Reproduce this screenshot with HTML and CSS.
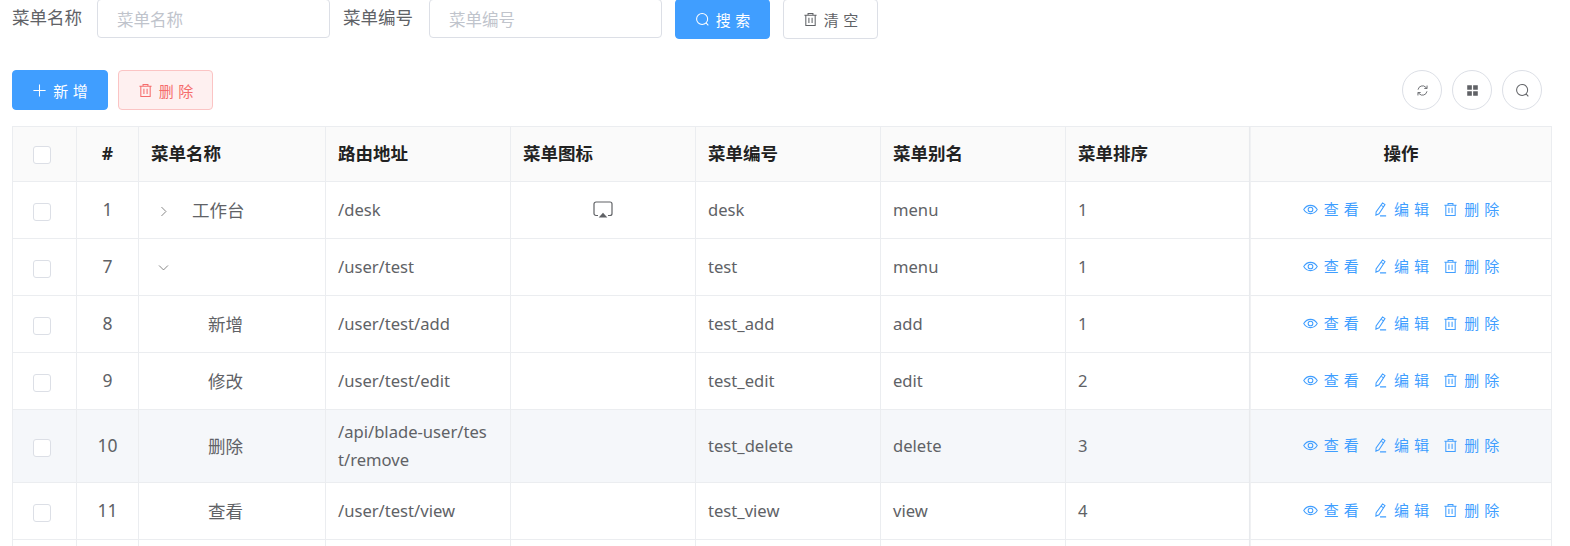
FILE: index.html
```html
<!DOCTYPE html>
<html lang="zh-CN">
<head>
  <meta charset="UTF-8" />
  <title>菜单管理</title>
  <link rel="stylesheet" href="styles.css">
</head>
<body>
  <svg class="sprite" xmlns="http://www.w3.org/2000/svg">
    <symbol id="i-search" viewBox="0 0 16 16"><circle cx="7.6" cy="7.4" r="5.9"/><path d="M11.8 11.7l2.4 2.5"/></symbol>
    <symbol id="i-trash" viewBox="0 0 16 16"><path d="M1.5 3.4h13M5.4 3.200V1.600h5.200v1.600M3 3.400v11h10v-11M6.300 6.200v5.600M9.700 6.200v5.600"/></symbol>
    <symbol id="i-plus" viewBox="0 0 16 16"><path d="M8 1.500v13M1.500 8h13"/></symbol>
    <symbol id="i-refresh" viewBox="0 0 16 16"><path d="M2.500 7a5.600 5.600 0 0 1 9.600-3l1.200 1.300M13.500 9a5.600 5.600 0 0 1-9.600 3l-1.200-1.300M13.600 1.900v3.600h-3.400M2.400 14.100v-3.600h3.400"/></symbol>
    <symbol id="i-menu" viewBox="0 0 16 16"><path class="solid" d="M1.500 1.500h5.700v5.700H1.500zM8.800 1.500h5.700v5.700H8.800zM1.500 8.800h5.700v5.700H1.500zM8.800 8.800h5.700v5.700H8.800z"/></symbol>
    <symbol id="i-eye" viewBox="0 0 16 16"><path d="M.8 8C2.500 5.200 5 3.600 8 3.600s5.500 1.600 7.200 4.400c-1.700 2.800-4.200 4.400-7.200 4.400S2.500 10.800.8 8z"/><circle cx="8" cy="8" r="2.500"/></symbol>
    <symbol id="i-edit" viewBox="0 0 16 16"><path d="M10.200 1l2.600 1.700-6.400 9.800-3.300 1.500.2-3.500zM8.600 3.400l2.600 1.800M7.500 14.800h6.500"/></symbol>
    <symbol id="i-airplay" viewBox="0 0 20 18"><path d="M5 14.500H3a2 2 0 0 1-2-2V3a2 2 0 0 1 2-2h14a2 2 0 0 1 2 2v9.500a2 2 0 0 1-2 2h-2"/><path class="solid" d="M10 11.800l4.300 4.600H5.700z"/></symbol>
    <symbol id="i-right" viewBox="0 0 16 16"><path d="M5.500 2.500L11 8l-5.500 5.500"/></symbol>
    <symbol id="i-down" viewBox="0 0 16 16"><path d="M2.500 5.500L8 11l5.500-5.500"/></symbol>
  </svg>

  <div class="page">
    <form class="search-form">
      <label class="form-label">菜单名称</label>
      <input class="form-input" type="text" placeholder="菜单名称" />
      <label class="form-label label-code">菜单编号</label>
      <input class="form-input" type="text" placeholder="菜单编号" />
      <button type="button" class="btn btn-primary btn-search"><svg class="icon"><use href="#i-search"/></svg>搜 索</button>
      <button type="button" class="btn btn-clear"><svg class="icon"><use href="#i-trash"/></svg>清 空</button>
    </form>

    <div class="toolbar">
      <button type="button" class="btn btn-primary"><svg class="icon"><use href="#i-plus"/></svg>新 增</button>
      <button type="button" class="btn btn-danger"><svg class="icon"><use href="#i-trash"/></svg>删 除</button>
      <div class="tool-right">
        <button type="button" class="btn-circle"><svg class="icon icon-sm"><use href="#i-refresh"/></svg></button>
        <button type="button" class="btn-circle"><svg class="icon icon-sm"><use href="#i-menu"/></svg></button>
        <button type="button" class="btn-circle"><svg class="icon"><use href="#i-search"/></svg></button>
      </div>
    </div>

    <table class="menu-table">
      <colgroup>
        <col class="c-check"><col class="c-index"><col class="c-name"><col class="c-path"><col class="c-std"><col class="c-std"><col class="c-std"><col class="c-sort"><col class="c-op">
      </colgroup>
      <thead>
        <tr>
          <th class="center check"><span class="checkbox"></span></th>
          <th class="center">#</th>
          <th>菜单名称</th>
          <th>路由地址</th>
          <th>菜单图标</th>
          <th>菜单编号</th>
          <th>菜单别名</th>
          <th>菜单排序</th>
          <th class="center op">操作</th>
        </tr>
      </thead>
      <tbody>
        <tr>
          <td class="center check"><span class="checkbox"></span></td>
          <td class="center num">1</td>
          <td><svg class="icon tree-arrow"><use href="#i-right"/></svg><span class="tree-name">工作台</span></td>
          <td>/desk</td>
          <td class="center icon-cell"><svg class="icon airplay"><use href="#i-airplay"/></svg></td>
          <td>desk</td>
          <td>menu</td>
          <td>1</td>
          <td class="center op">
            <a class="op-link"><svg class="icon"><use href="#i-eye"/></svg>查 看</a>
            <a class="op-link"><svg class="icon"><use href="#i-edit"/></svg>编 辑</a>
            <a class="op-link"><svg class="icon"><use href="#i-trash"/></svg>删 除</a>
          </td>
        </tr>
        <tr>
          <td class="center check"><span class="checkbox"></span></td>
          <td class="center num">7</td>
          <td><svg class="icon tree-arrow"><use href="#i-down"/></svg></td>
          <td>/user/test</td>
          <td></td>
          <td>test</td>
          <td>menu</td>
          <td>1</td>
          <td class="center op">
            <a class="op-link"><svg class="icon"><use href="#i-eye"/></svg>查 看</a>
            <a class="op-link"><svg class="icon"><use href="#i-edit"/></svg>编 辑</a>
            <a class="op-link"><svg class="icon"><use href="#i-trash"/></svg>删 除</a>
          </td>
        </tr>
        <tr>
          <td class="center check"><span class="checkbox"></span></td>
          <td class="center num">8</td>
          <td><span class="tree-child">新增</span></td>
          <td>/user/test/add</td>
          <td></td>
          <td>test_add</td>
          <td>add</td>
          <td>1</td>
          <td class="center op">
            <a class="op-link"><svg class="icon"><use href="#i-eye"/></svg>查 看</a>
            <a class="op-link"><svg class="icon"><use href="#i-edit"/></svg>编 辑</a>
            <a class="op-link"><svg class="icon"><use href="#i-trash"/></svg>删 除</a>
          </td>
        </tr>
        <tr>
          <td class="center check"><span class="checkbox"></span></td>
          <td class="center num">9</td>
          <td><span class="tree-child">修改</span></td>
          <td>/user/test/edit</td>
          <td></td>
          <td>test_edit</td>
          <td>edit</td>
          <td>2</td>
          <td class="center op">
            <a class="op-link"><svg class="icon"><use href="#i-eye"/></svg>查 看</a>
            <a class="op-link"><svg class="icon"><use href="#i-edit"/></svg>编 辑</a>
            <a class="op-link"><svg class="icon"><use href="#i-trash"/></svg>删 除</a>
          </td>
        </tr>
        <tr class="hover">
          <td class="center check"><span class="checkbox"></span></td>
          <td class="center num">10</td>
          <td><span class="tree-child">删除</span></td>
          <td class="path-wrap">/api/blade-user/test/remove</td>
          <td></td>
          <td>test_delete</td>
          <td>delete</td>
          <td>3</td>
          <td class="center op">
            <a class="op-link"><svg class="icon"><use href="#i-eye"/></svg>查 看</a>
            <a class="op-link"><svg class="icon"><use href="#i-edit"/></svg>编 辑</a>
            <a class="op-link"><svg class="icon"><use href="#i-trash"/></svg>删 除</a>
          </td>
        </tr>
        <tr>
          <td class="center check"><span class="checkbox"></span></td>
          <td class="center num">11</td>
          <td><span class="tree-child">查看</span></td>
          <td>/user/test/view</td>
          <td></td>
          <td>test_view</td>
          <td>view</td>
          <td>4</td>
          <td class="center op">
            <a class="op-link"><svg class="icon"><use href="#i-eye"/></svg>查 看</a>
            <a class="op-link"><svg class="icon"><use href="#i-edit"/></svg>编 辑</a>
            <a class="op-link"><svg class="icon"><use href="#i-trash"/></svg>删 除</a>
          </td>
        </tr>
        <tr>
          <td></td><td></td><td></td><td></td><td></td><td></td><td></td><td></td><td class="op"></td>
        </tr>
      </tbody>
    </table>
  </div>
</body>
</html>
```

FILE: styles.css
```css
html, body {
  margin: 0;
  height: 546px;
  overflow: hidden;
  background: #fff;
}

body {
  font-family: "Noto Sans", "Noto Sans CJK SC", sans-serif;
  font-size: 17.5px;
  color: #606266;
}

.sprite {
  display: none;
}

.icon {
  width: 15px;
  height: 15px;
  fill: none;
  stroke: currentColor;
  stroke-width: 1.1;
  flex: none;
}

.icon-sm {
  width: 13px;
  height: 13px;
}

.solid {
  fill: currentColor;
  stroke: none;
}

.page {
  margin-top: -1px;
  padding: 0 20px 0 12px;
}

/* search form */
.search-form {
  display: flex;
  align-items: flex-start;
  height: 40px;
}

.form-label {
  width: 85px;
  line-height: 37px;
  color: #606266;
  font-size: 17.5px;
}

.label-code {
  width: 86px;
  margin-left: 13px;
}

.form-input {
  box-sizing: border-box;
  width: 233px;
  height: 39px;
  padding: 0 19px;
  border: 1px solid #dcdfe6;
  border-radius: 4px;
  font: 16.5px "Noto Sans CJK SC", sans-serif;
  color: #606266;
  outline: none;
}

.form-input::placeholder {
  color: #c0c4cc;
}

.btn {
  box-sizing: border-box;
  display: inline-flex;
  align-items: center;
  justify-content: center;
  gap: 6px;
  width: 95px;
  height: 40px;
  padding: 0;
  border: 1px solid #dcdfe6;
  border-radius: 4px;
  background: #fff;
  color: #606266;
  font: 15px "Noto Sans CJK SC", sans-serif;
  word-spacing: 1px;
}

.btn-primary {
  background: #409eff;
  border-color: #409eff;
  color: #fff;
}

.btn-search {
  margin-left: 13px;
}

.btn-clear {
  margin-left: 13px;
}

.btn-danger {
  background: #fef0f0;
  border-color: #fbc4c4;
  color: #f56c6c;
}

/* toolbar */
.toolbar {
  display: flex;
  gap: 10px;
  margin-top: 31px;
}

.toolbar .btn-primary {
  width: 96px;
}

.tool-right {
  display: flex;
  gap: 10px;
  margin-left: auto;
  margin-right: 8px;
}

.btn-circle {
  box-sizing: border-box;
  display: flex;
  align-items: center;
  justify-content: center;
  width: 40px;
  height: 40px;
  padding: 0;
  border: 1px solid #dcdfe6;
  border-radius: 50%;
  background: #fff;
  color: #606266;
}

/* table */
.menu-table {
  box-sizing: border-box;
  width: 1540px;
  margin-top: 16px;
  table-layout: fixed;
  border-collapse: separate;
  border-spacing: 0;
  border-top: 1px solid #ebedf0;
  border-left: 1px solid #ebedf0;
}

.c-check { width: 64px; }
.c-index { width: 62px; }
.c-name { width: 187px; }
.c-path { width: 185px; }
.c-std { width: 185px; }
.c-sort { width: 184px; }
.c-op { width: 302px; }

th, td {
  padding: 8px 17px 8px 12px;
  border-right: 1px solid #ebedf0;
  border-bottom: 1px solid #ebedf0;
  text-align: left;
  line-height: 28px;
}

th {
  height: 38px;
  padding-top: 7px;
  padding-bottom: 9px;
  background: #fafafa;
  color: #222;
  font-size: 17.5px;
  font-weight: 700;
}

td {
  height: 40px;
  font-size: 16.6px;
}

th.center, td.center {
  padding-left: 0;
  padding-right: 0;
  text-align: center;
}

th.check, td.check {
  padding-right: 5px;
}

td.num {
  padding-top: 7px;
  padding-bottom: 9px;
  font-size: 17.5px;
}

.op {
  border-left: 1px solid #f0f1f3;
  box-shadow: -1px 0 2px rgba(0, 0, 0, 0.02);
}

.hover td {
  background: #f5f7fa;
}

.path-wrap {
  word-break: break-all;
}

.checkbox {
  box-sizing: border-box;
  display: inline-block;
  width: 18px;
  height: 18px;
  border: 1px solid #dcdfe6;
  border-radius: 3px;
  background: #fff;
  vertical-align: middle;
}

.tree-arrow {
  width: 13px;
  height: 13px;
  margin-left: 6px;
  vertical-align: -1px;
  color: #777;
}

.tree-name {
  margin-left: 22px;
  font-size: 17.5px;
}

.tree-child {
  margin-left: 57px;
  font-size: 17.5px;
}

.airplay {
  display: block;
  width: 20px;
  height: 18px;
  margin: 0 auto;
  stroke-width: 1.2;
}

.op-link {
  display: inline-flex;
  align-items: center;
  gap: 6px;
  margin: 0 5px;
  color: #409eff;
  font-size: 15px;
  word-spacing: 1px;
}
```
